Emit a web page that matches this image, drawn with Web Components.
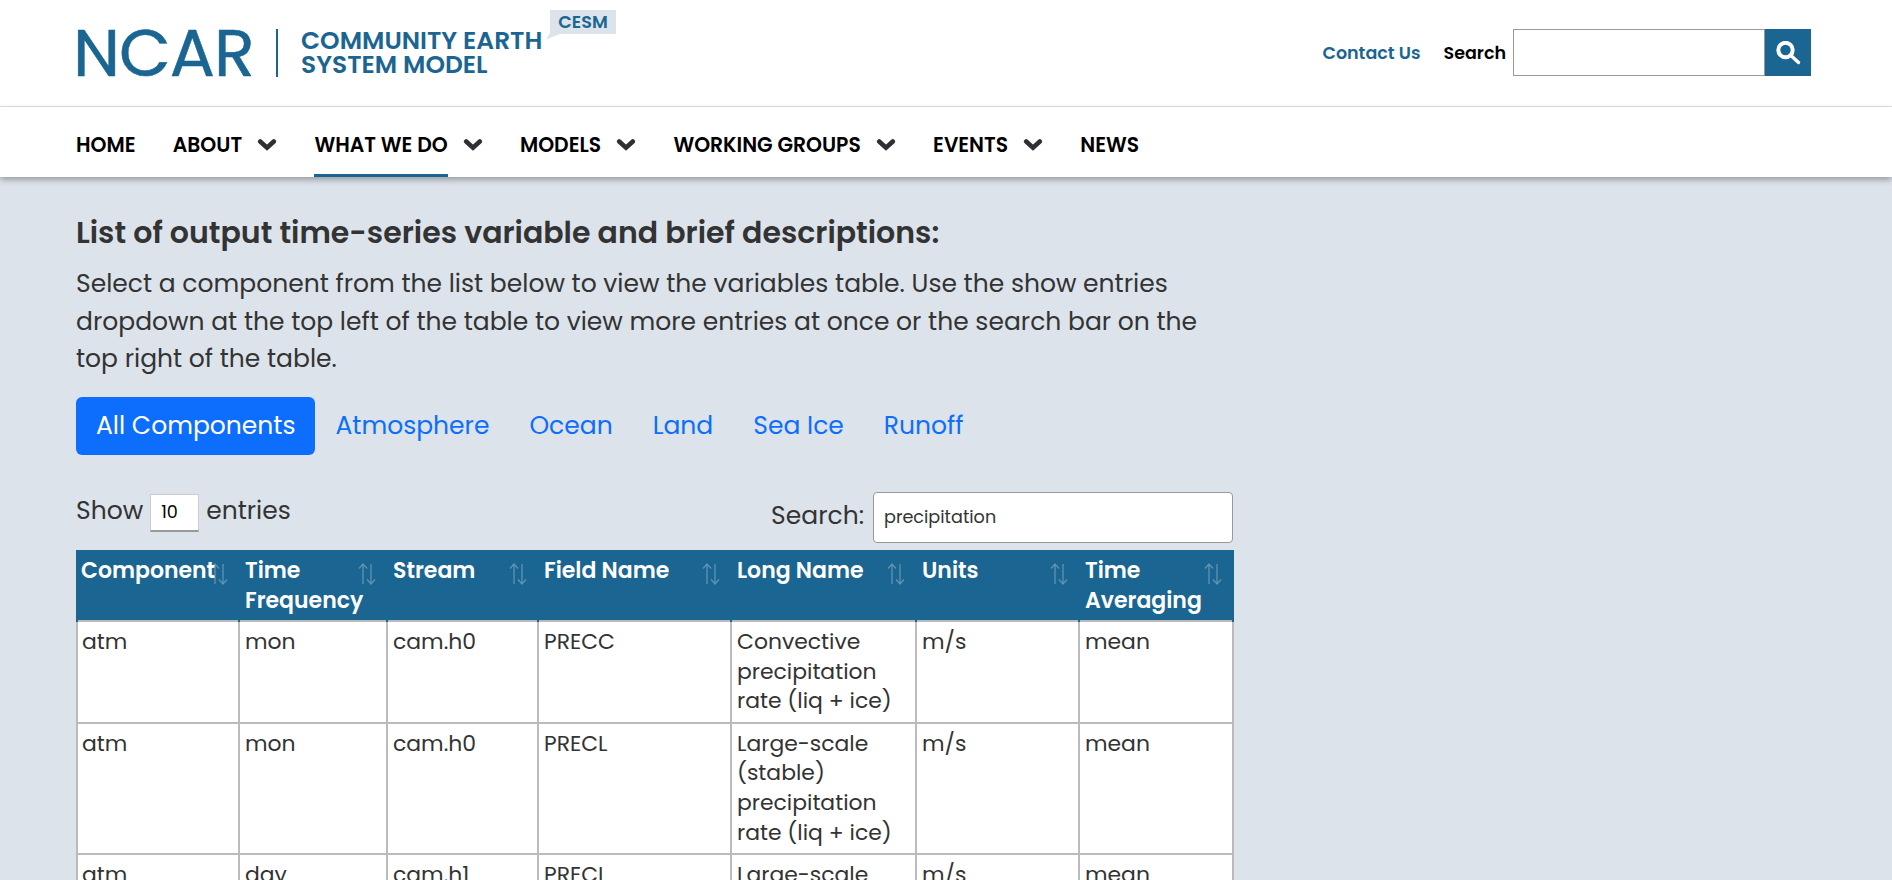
<!DOCTYPE html>
<html lang="en"><head><meta charset="utf-8"><title>CESM</title>
<style>
html,body{margin:0;padding:0;height:880px;overflow:hidden;background:#dce3eb;font-family:Poppins,Inter,"Noto Sans",sans-serif;color:#333}
</style></head><body>
<site-header></site-header>
<site-nav></site-nav>
<page-content></page-content>
<script>
const ff='Poppins,Inter,"Noto Sans",sans-serif';
function def(name,html){customElements.define(name,class extends HTMLElement{constructor(){super();this.attachShadow({mode:'open'}).innerHTML=html;}});}
def('site-header',`<style>
:host{display:flex;align-items:center;justify-content:space-between;box-sizing:border-box;height:107px;padding:0 81px 0 76px;background:#fff;border-bottom:1px solid #e0e0e0;font-family:${ff}}
.logo{display:flex;align-items:center;height:48px;position:relative;color:#1b6592;margin-top:-1px}
.ncar{font-size:67px;line-height:48px;font-weight:400;letter-spacing:-1px;width:200px;margin-left:-3px;margin-right:3px;-webkit-text-stroke:.5px #1b6592}
.bar{width:2px;height:48px;background:#1b6592;margin-right:23px}
.name{font-size:24.9px;line-height:24px;font-weight:600;white-space:nowrap}
.badge{position:absolute;left:474px;top:-19px;width:66px;height:24px;background:#dce3eb;font-size:17.6px;font-weight:600;line-height:24px;text-align:center}
.badge svg{position:absolute;left:-5px;top:23px}
.right{display:flex;align-items:center;margin-top:-1px}
a{color:#1b6592;font-weight:600;font-size:17.5px;margin-right:23px}
label{color:#000;font-weight:600;font-size:17.5px;margin-right:7px}
.in{box-sizing:border-box;width:252px;height:47px;border:1px solid #999;background:#fff}
.btn{width:46px;height:47px;background:#1b6592;display:flex;align-items:center;justify-content:center}
</style>
<div class="logo"><span class="ncar">NCAR</span><span class="bar"></span><span class="name">COMMUNITY EARTH<br>SYSTEM MODEL</span>
<span class="badge">CESM<svg width="16" height="8"><path d="M5 0L1 6.5L15 1V0Z" fill="#dce3eb"/></svg></span></div>
<div class="right"><a>Contact Us</a><label>Search</label><div class="in"></div><div class="btn"><svg width="25" height="24" viewBox="0 0 25 24" fill="none" stroke="#fff"><circle cx="9.5" cy="9" r="7.2" stroke-width="4"/><path d="M15.5 15l7 6.5" stroke-width="3.4" stroke-linecap="round"/></svg></div></div>`);
customElements.define('nav-item',class extends HTMLElement{constructor(){super();const c=this.hasAttribute('caret'),a=this.hasAttribute('active');this.attachShadow({mode:'open'}).innerHTML=`<style>
:host{display:flex;align-items:center;height:70px;margin-right:37.3px;font-size:20.3px;font-weight:600;color:#000;position:relative}
.t{display:flex;align-items:center;height:70px;box-sizing:border-box;padding-top:6px;${a?'box-shadow:inset 0 -3px 0 #1b6592;':''}}
svg{margin-left:15px;margin-top:6px}
</style><span class="t"><slot></slot></span>${c?'<svg width="20" height="14" viewBox="0 0 20 14"><path d="M3.2 3.5L10 9.7L16.8 3.5" fill="none" stroke="#2f2f36" stroke-width="4.6" stroke-linecap="round"/></svg>':''}`;}});
def('site-nav',`<style>
:host{display:flex;height:70px;padding-left:76px;background:#fff;box-shadow:0 3px 6px rgba(0,0,0,.3);position:relative;font-family:${ff}}
</style><nav-item>HOME</nav-item><nav-item caret>ABOUT</nav-item><nav-item caret active>WHAT WE DO</nav-item><nav-item caret>MODELS</nav-item><nav-item caret>WORKING GROUPS</nav-item><nav-item caret>EVENTS</nav-item><nav-item>NEWS</nav-item>`);
def('sort-icon',`<style>:host{position:absolute;right:10px;top:13px;display:block;width:18px;height:22px}</style><svg width="18" height="22" viewBox="0 0 18 22" fill="none" stroke-width="1.3"><path d="M5 21V1M1 5.5L5 1L9 5.5" stroke="#fff" stroke-opacity=".3"/><path d="M13 1V21M9 16.5L13 21L17 16.5" stroke="#fff" stroke-opacity=".3"/></svg>`);
def('data-table',`<style>
:host{display:block;width:1157px;font-family:${ff}}
table{border-collapse:collapse;table-layout:fixed;width:1156px;background:#fff;color:#333}
th{background:#1b6592;color:#fff;font-size:22px;font-weight:600;line-height:30px;text-align:left;vertical-align:top;padding:6px 30px 4px 5px;position:relative;box-sizing:border-box;height:70px;border:solid #1b6592;border-width:0 2px}
td{font-size:21.9px;line-height:29.7px;vertical-align:top;border:2px solid #bbb;padding:5px 5px 5.5px 5px}
th:first-child{padding-left:3px}
td:first-child{padding-left:4px}
</style><table>
<colgroup><col style="width:162px"><col style="width:148px"><col style="width:151px"><col style="width:193px"><col style="width:185px"><col style="width:163px"><col style="width:154px"></colgroup>
<thead><tr><th style="padding-right:0">Component<sort-icon></sort-icon></th><th>Time Frequency<sort-icon></sort-icon></th><th>Stream<sort-icon></sort-icon></th><th>Field Name<sort-icon></sort-icon></th><th>Long Name<sort-icon></sort-icon></th><th>Units<sort-icon></sort-icon></th><th>Time Averaging<sort-icon></sort-icon></th></tr></thead>
<tbody>
<tr><td>atm</td><td>mon</td><td>cam.h0</td><td>PRECC</td><td>Convective precipitation rate (liq + ice)</td><td>m/s</td><td>mean</td></tr>
<tr><td>atm</td><td>mon</td><td>cam.h0</td><td>PRECL</td><td>Large-scale (stable) precipitation rate (liq + ice)</td><td>m/s</td><td>mean</td></tr>
<tr><td>atm</td><td>day</td><td>cam.h1</td><td>PRECL</td><td>Large-scale (stable) precipitation rate (liq + ice)</td><td>m/s</td><td>mean</td></tr>
</tbody></table>`);
def('page-content',`<style>
:host{display:block;padding:33px 0 0 76px;font-family:${ff};color:#333}
h2{margin:0;font-size:30px;line-height:45px;font-weight:600}
p{margin:10px 0 0;width:1157px;font-size:25px;line-height:37.5px}
.tabs{display:flex;margin-top:19.5px;font-size:25px;line-height:37.5px;color:#0d6efd}
.tabs span{padding:10.25px 20px}
.tabs .on{background:#0d6efd;color:#fff;border-radius:6px}
.ctl{display:flex;justify-content:space-between;width:1157px;height:95px;box-sizing:border-box;padding-top:37px;font-size:25px}
.show{display:flex;align-items:flex-start;line-height:33px;margin-top:2px}
.sel{box-sizing:border-box;width:49px;height:38px;background:#fff;border:1px solid #ccc;border-bottom:2px solid #999;margin:0 7px 0 7px;font-size:17.6px;color:#000;padding:0 0 0 10px;line-height:35px}
.srch{display:flex;align-items:flex-start;line-height:47px}
.q{box-sizing:border-box;width:360px;height:51px;border:1px solid #999;border-radius:4px;background:#fff;margin-left:9px;font-size:17.6px;line-height:49px;padding-left:10px;color:#333}
</style>
<h2>List of output time-series variable and brief descriptions:</h2>
<p>Select a component from the list below to view the variables table. Use the show entries dropdown at the top left of the table to view more entries at once or the search bar on the top right of the table.</p>
<div class="tabs"><span class="on">All Components</span><span>Atmosphere</span><span>Ocean</span><span>Land</span><span>Sea Ice</span><span>Runoff</span></div>
<div class="ctl"><div class="show">Show<span class="sel">10</span>entries</div><div class="srch">Search:<span class="q">precipitation</span></div></div>
<data-table></data-table>`);
</script>
</body></html>
